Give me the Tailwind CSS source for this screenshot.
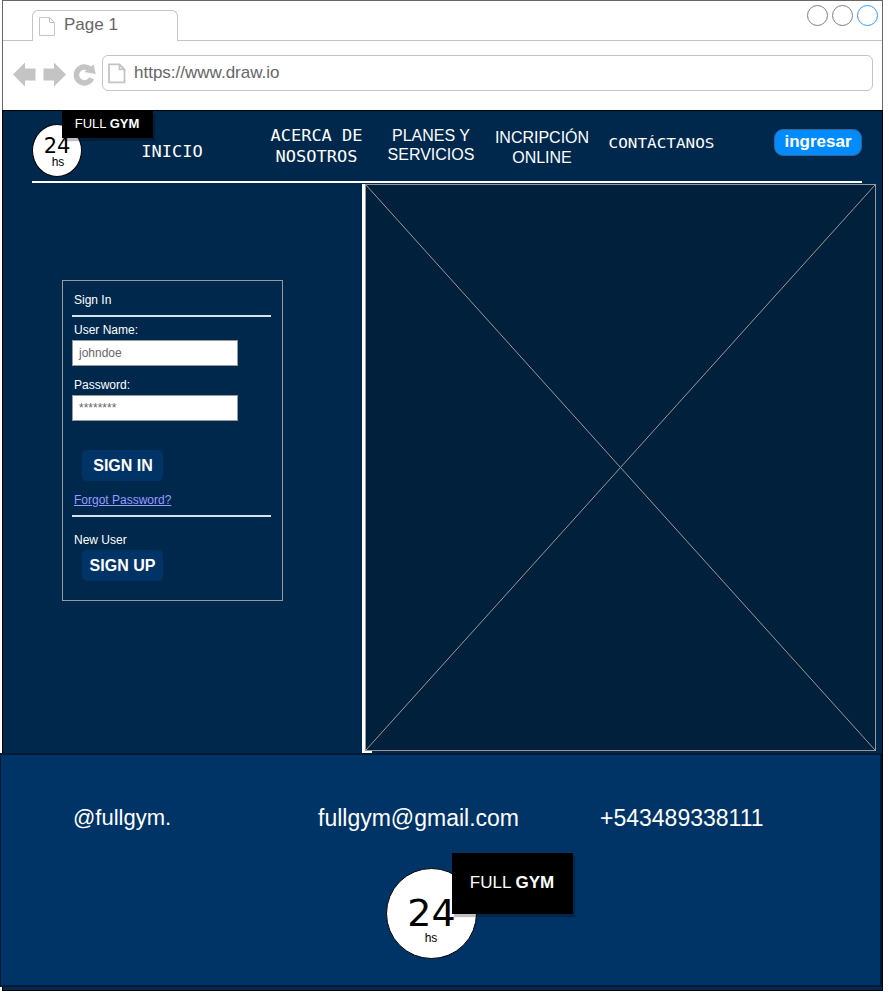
<!DOCTYPE html>
<html lang="es">
<head>
<meta charset="utf-8">
<title>Full Gym</title>
<script src="https://cdn.jsdelivr.net/npm/@tailwindcss/browser@4"></script>
</head>
<body class="bg-white overflow-hidden font-['Liberation_Sans',Arial,sans-serif]">
<div class="ml-[2px] w-[881px] h-[991px] flex flex-col">

  <!-- Browser chrome -->
  <header class="h-[110px] shrink-0 border-t border-x border-[#666] text-[#666]">
    <div class="h-10 flex items-end">
      <div class="w-[29px] h-full border-b border-[#c4c4c4]"></div>
      <div class="w-[146px] h-[31px] border-t border-x border-[#c4c4c4] rounded-t-[6px] flex pl-[6px] pt-[6px]">
        <svg class="w-[17px] h-5 shrink-0" viewBox="0 0 17 20" fill="none" stroke="#c4c4c4"><path d="M.5.5h10l5 5v13H.5zM10.500.5v5h5"/></svg>
        <span class="ml-[8px] -mt-[2px] text-[17px] leading-5">Page 1</span>
      </div>
      <div class="flex-1 h-full border-b border-[#c4c4c4] flex justify-end gap-[4px] pt-[4px] pr-[4px]">
        <i class="size-[21px] rounded-full border border-[#808080]"></i>
        <i class="size-[21px] rounded-full border border-[#808080]"></i>
        <i class="size-[21px] rounded-full border border-[#3399ff]"></i>
      </div>
    </div>
    <div class="flex pt-[14px] pl-[10px]">
      <svg class="w-[89px] h-9 shrink-0" viewBox="0 0 89 36" fill="#c4c4c4">
        <path d="M0 19.500 12 7.500v6h10.500v12H12v6zM53 19.500 41 7.500v6H30.500v12H41v6z"/>
        <path d="M80.500 9.500 82.800 19 71.500 17z"/>
        <path d="M77 14.200a8 8 0 1 0 1.600 9.200" fill="none" stroke="#c4c4c4" stroke-width="5.500"/>
      </svg>
      <div class="w-[771px] h-9 border border-[#c4c4c4] rounded-[6px] flex pl-[5px] pt-[7px]">
        <svg class="w-[18px] h-[21px] shrink-0" viewBox="0 0 18 21" fill="none" stroke="#c4c4c4" stroke-width="1.800"><path d="M1 1.400h10.500l5 5v13H1zM11.500 1.400v5h5"/></svg>
        <span class="ml-[8px] mt-px text-[17px] leading-[18px]">https://www.draw.io</span>
      </div>
    </div>
  </header>

  <!-- Site -->
  <div class="flex-1 border border-black bg-[#00284d] flex flex-col text-white">
    <nav class="ml-[29px] w-[830px] h-[72px] shrink-0 border-b-2 border-white flex items-start text-center">
      <div class="relative w-[50px] h-[53px] mt-[13px] rounded-[50%] bg-white border border-black text-black">
        <div class="font-['DejaVu_Sans',sans-serif] text-[21px] leading-[20px] pt-[11px]">24</div>
        <div class="text-[12px] leading-3 pl-[2px]">hs</div>
        <div class="absolute left-[29px] -top-[14px] w-[91px] h-[27px] bg-black text-white text-[13px] leading-[25px] pr-px shadow-[2px_3px_1px_rgba(0,0,0,0.25)]">FULL <b>GYM</b></div>
      </div>
      <a class="w-[100px] ml-[40px] mt-[31px] font-['DejaVu_Sans_Mono',monospace] text-[17px] leading-5 scale-y-[0.88]">INICIO</a>
      <a class="w-[111px] ml-[39px] mt-[11px] font-['DejaVu_Sans_Mono',monospace] text-[17px] leading-[24px] scale-y-[0.88]">ACERCA DE NOSOTROS</a>
      <a class="w-[110px] ml-[4px] mt-[15px] text-[16px] leading-[19px]">PLANES Y SERVICIOS</a>
      <a class="w-[110px] ml-px mt-[17px] text-[16px] leading-5">INCRIPCIÓN ONLINE</a>
      <a class="w-[121px] ml-[4px] mt-[23px] font-['DejaVu_Sans_Mono',monospace] text-[16px] leading-5 scale-y-[0.88]">CONTÁCTANOS</a>
      <button class="w-[88px] h-[27px] ml-[52px] mt-[18px] rounded-[9px] border border-[#36648f] bg-[#008cff] font-bold text-[17px] leading-[22px] pb-px">ingresar</button>
    </nav>

    <div class="flex h-[570px] shrink-0">
      <main class="w-[359px] pt-[97px] pl-[59px]">
        <form class="w-[221px] h-[321px] border border-[#999] pl-[9px] text-[12px]">
          <h1 class="pl-[2px] pt-[12px] h-[34px] leading-[14px]">Sign In</h1>
          <hr class="w-[199px] h-[2px] border-0 bg-[#d3e2f0]">
          <label class="block pl-[2px] pt-[6px] h-[23px] leading-[14px]">User Name:</label>
          <div class="w-[166px] h-[26px] bg-white border border-[#999] text-[#666] pl-[6px] leading-[24px]">johndoe</div>
          <label class="block pl-[2px] pt-[12px] h-[29px] leading-[14px]">Password:</label>
          <div class="w-[166px] h-[26px] bg-white border border-[#999] text-[#666] pl-[6px] leading-[24px]">********</div>
          <button type="button" class="block mt-[29px] ml-[10px] w-[81px] h-[31px] rounded-[5px] bg-[#003366] text-[16px] font-bold pl-px">SIGN IN</button>
          <a class="block pl-[2px] mt-[12px] h-[22px] leading-[14px] text-[#9999ff] underline">Forgot Password?</a>
          <hr class="w-[199px] h-[2px] border-0 bg-[#d3e2f0]">
          <p class="pl-[2px] mt-[16px] h-[17px] leading-[14px]">New User</p>
          <button type="button" class="block ml-[10px] w-[81px] h-[31px] rounded-[5px] bg-[#003366] text-[16px] font-bold">SIGN UP</button>
        </form>
      </main>
      <div class="w-[3px] mt-px bg-white"></div>
      <div class="pt-px">
        <svg class="block w-[511px] h-[567px] bg-[#00203c] border border-[#999]" viewBox="0 0 509 565" stroke="#999"><path d="M0 0 509 565M509 0 0 565"/></svg>
        <div class="w-[7px] h-[3px] bg-white"></div>
      </div>
    </div>

    <footer class="-ml-[3px] w-[882px] h-[234px] shrink-0 bg-[#003366] border-2 border-l border-[#001a33]">
      <div class="flex pt-[49px] pl-[72px] text-[23px] leading-7">
        <span class="w-[245px] text-[22px]">@fullgym.</span>
        <span class="w-[282px]">fullgym@gmail.com</span>
        <span>+543489338111</span>
      </div>
      <div class="relative ml-[385px] mt-[36px] size-[91px] rounded-full bg-white border border-black text-black text-center">
        <div class="font-['DejaVu_Sans',sans-serif] text-[38px] leading-[38px] pt-[25px]">24</div>
        <div class="text-[12px] leading-3 pr-px">hs</div>
        <div class="absolute left-[65px] -top-[16px] w-[121px] h-[61px] bg-black text-white text-[17px] leading-[60px] pr-px shadow-[2px_3px_1px_rgba(0,0,0,0.25)]">FULL <b>GYM</b></div>
      </div>
    </footer>
  </div>
</div>
</body>
</html>
